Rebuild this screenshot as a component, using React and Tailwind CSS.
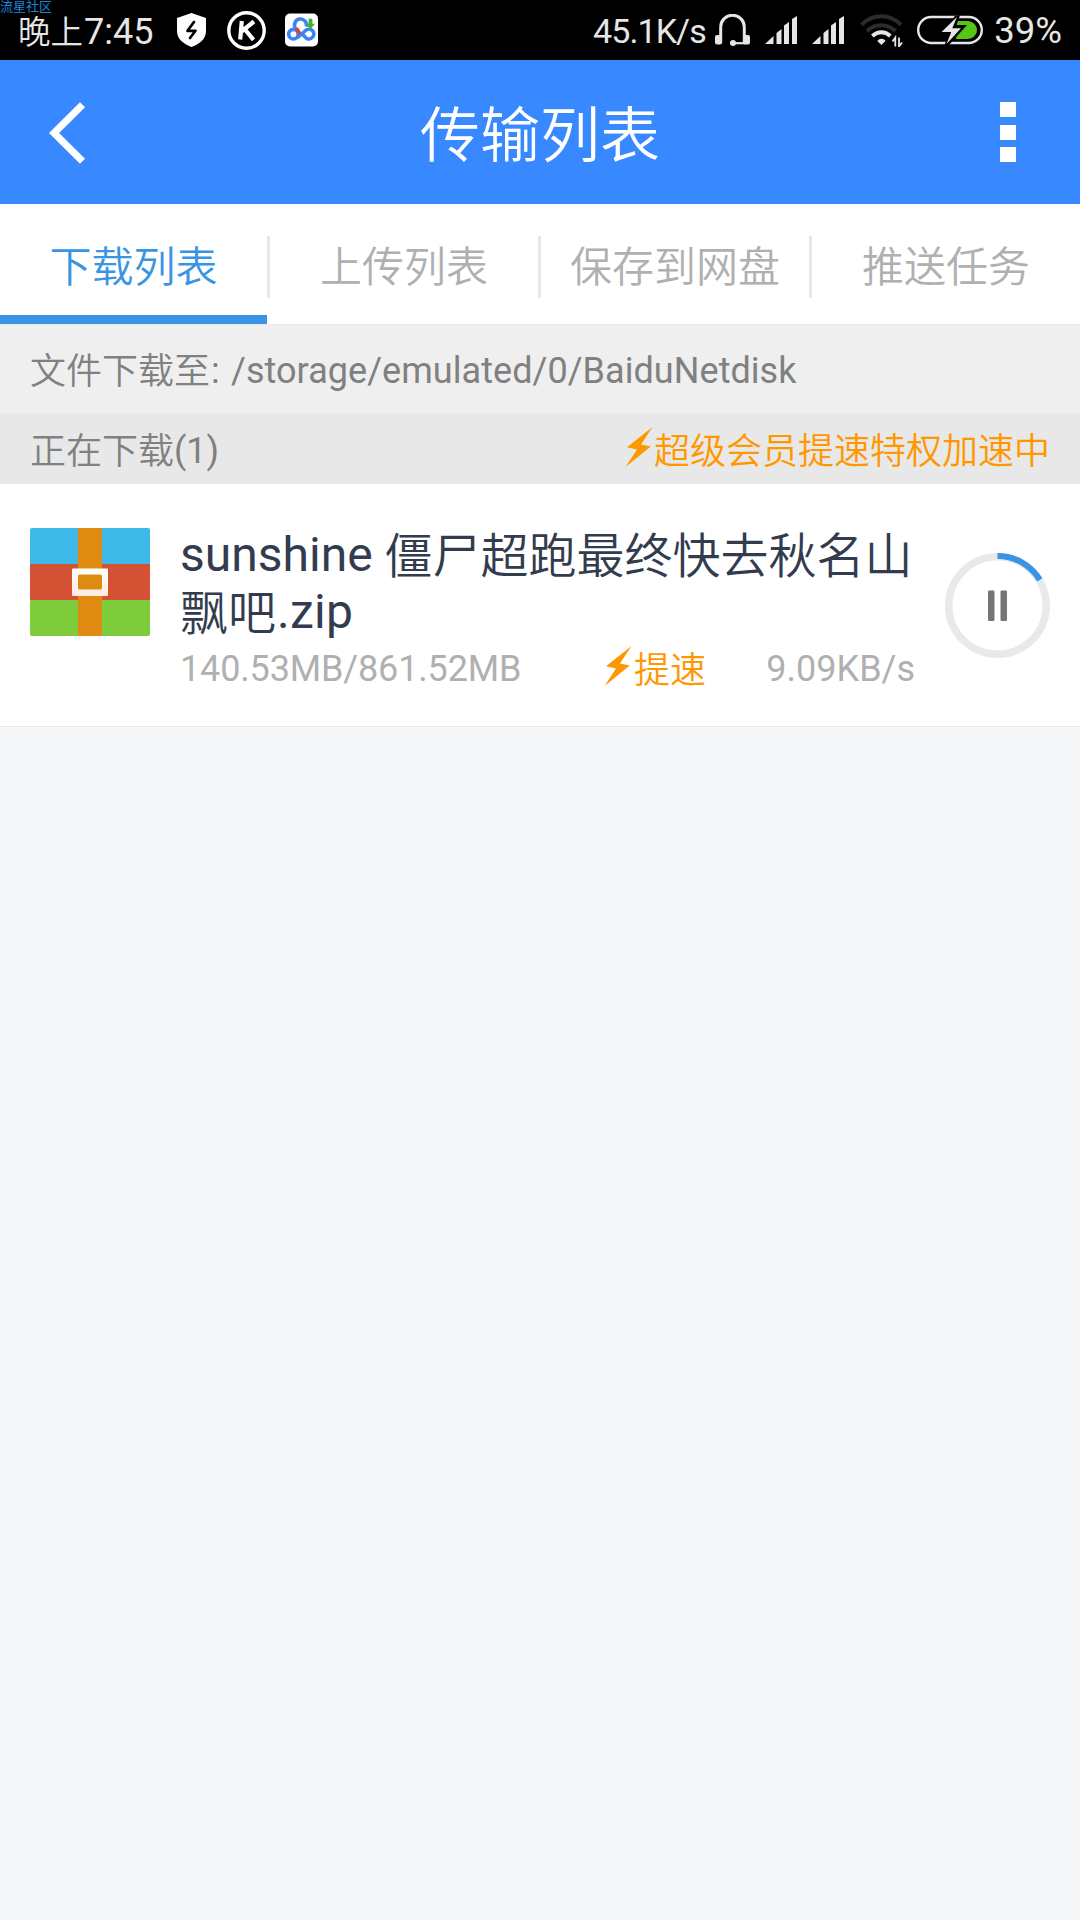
import React, { useState } from "react";

const TABS = ["下载列表", "上传列表", "保存到网盘", "推送任务"];

const TASK = {
  // file name, already broken into lines; latin and chinese runs use different weights
  name: [
    [
      { text: "sunshine", latin: true },
      { text: "僵尸超跑最终快去秋名山" },
    ],
    [{ text: "飘吧" }, { text: ".zip", latin: true }],
  ],
  size: "140.53MB/861.52MB",
  speed: "9.09KB/s",
  progress: 0.163,
};

function ShieldIcon() {
  return (
    <svg className="w-[29px] h-[34px]" viewBox="0 0 29 34" fill="none">
      <path d="M14.5 0 L29 5 V18 C29 26 23 30.500 14.500 34 C6 30.500 0 26 0 18 V5 Z" fill="#fff" />
      <path d="M17 9 L10.500 17.800 H18.500 L13 25" stroke="#000" strokeWidth="2.700" strokeLinecap="round" strokeLinejoin="round" />
    </svg>
  );
}

function KIcon() {
  return (
    <svg className="w-[39px] h-[39px]" viewBox="0 0 39 39" fill="none" stroke="#fff">
      <circle cx="19.500" cy="19.500" r="17.700" strokeWidth="3.400" />
      <path d="M14.800 10 L13.200 28.500 M27 10.500 L14.500 20.500 M18 18.500 L26.500 28.800" strokeWidth="4.200" />
    </svg>
  );
}

function NetdiskIcon() {
  return (
    <svg className="w-[33px] h-[34px]" viewBox="0 0 34 34" fill="none">
      <rect width="34" height="34" rx="5" fill="#fff" />
      <g stroke="#3b82f6" strokeWidth="3.700">
        <path d="M11 15.500 A6.200 6.200 0 1 1 22 13.500" />
        <circle cx="8.700" cy="21.300" r="4.900" />
        <path d="M12.500 25 L21 17.800 A5 5 0 1 1 21.500 25 L18.500 22" />
      </g>
      <path d="M11.800 15 L15.500 21" stroke="#e23c32" strokeWidth="3.600" />
      <path d="M24.300 5.500 H28.200 V10.500 H31 L26.200 16 L21.500 10.500 H24.300 Z" fill="#43b02a" />
    </svg>
  );
}

function HeadsetIcon() {
  return (
    <svg className="w-[35px] h-[32px]" viewBox="0 0 35 32" fill="none">
      <path d="M5.700 29 V13 A11.800 11.800 0 0 1 29.300 13 V29" stroke="#e6e6e6" strokeWidth="3" />
      <path d="M18 29.200 H30" stroke="#e6e6e6" strokeWidth="2.200" />
      <rect x="0" y="21" width="7" height="9.500" rx="2" fill="#e6e6e6" />
      <rect x="28" y="21" width="7" height="9.500" rx="2" fill="#e6e6e6" />
      <circle cx="18" cy="29" r="3" fill="#e6e6e6" />
    </svg>
  );
}

function SignalIcon() {
  return (
    <svg className="w-[32px] h-[28px]" viewBox="0 0 32 28" fill="#e6e6e6">
      <path d="M0 28 L8.500 20 V28 Z" />
      <path d="M11.500 17 L16.500 13 V28 H11.500 Z" />
      <path d="M19 9.500 L24 6 V28 H19 Z" />
      <path d="M27 3 L32 0 V28 H27 Z" />
    </svg>
  );
}

function WifiIcon() {
  return (
    <svg className="w-[43px] h-[33px]" viewBox="0 0 43 33" fill="none">
      <path d="M1.500 10.700 C13 -0.500 29.500 -0.500 41 10.700" stroke="#2b2b2b" strokeWidth="4" />
      <path d="M7 17 C15.500 9.300 26.500 9.300 35.500 17" stroke="#2b2b2b" strokeWidth="4" />
      <path d="M12.300 22 C18 17 25 17 30.300 22" stroke="#e6e6e6" strokeWidth="3.800" />
      <path d="M17.300 27 C19.500 24 23.500 24 25.500 27 L21.400 31 Z" fill="#e6e6e6" />
      <path d="M35.300 32.500 V23.500 L32.500 27.500 M39 23.500 V32.500 L42 28.500" stroke="#e6e6e6" strokeWidth="1.800" />
    </svg>
  );
}

function BatteryIcon() {
  return (
    <svg className="w-[66px] h-[30px]" viewBox="0 0 66 30" fill="none">
      <rect x="1.200" y="2" width="63.600" height="26" rx="13" stroke="#e6e6e6" strokeWidth="2.400" />
      <path d="M40 6 H51 A9 9 0 0 1 51 24 H39 Z" fill="#55c518" />
      <path d="M38.500 0.500 L20.500 19.500 H31.500 L27.500 30 L32 30 L50 10 H39.500 L43 0.500 Z" fill="#000" />
      <path d="M40 2 L24.500 17 H34.300 L29.500 29 L44 13.200 H35.300 Z" fill="#e6e6e6" />
    </svg>
  );
}

function StatusBar() {
  return (
    <div className="relative h-[60px] bg-black text-[#e6e6e6] flex items-center justify-between pl-[18px] pr-[18px]">
      <span className="absolute left-0 top-0 text-[13px] leading-[13px] text-[#1689dd]">流星社区</span>
      <div className="flex items-center">
        <div className="w-[159px] pt-1 text-[36px] leading-[56px] whitespace-nowrap">
          <span className="text-[32.500px] font-[350]">晚上</span>
          <span className="pl-[1px]">7:45</span>
        </div>
        <ShieldIcon />
        <div className="w-[21px]" />
        <KIcon />
        <div className="w-[19px]" />
        <NetdiskIcon />
      </div>
      <div className="flex items-center">
        <span className="w-[122px] pt-[2px] text-[34px] leading-[56px] tracking-[-0.9px]">45.1K/s</span>
        <HeadsetIcon />
        <div className="w-[15px]" />
        <SignalIcon />
        <div className="w-[15px]" />
        <SignalIcon />
        <div className="w-[16px]" />
        <WifiIcon />
        <div className="w-[14px]" />
        <BatteryIcon />
        <span className="w-[79px] pt-[2px] text-right text-[36.500px] leading-[56px]">39%</span>
      </div>
    </div>
  );
}

function Header() {
  return (
    <header className="h-[144px] bg-[#3888ff] text-white flex items-center justify-between pl-[49px] pr-[64px]">
      <button className="w-[80px] pt-[1px]">
        <svg className="w-[38px] h-[62px]" viewBox="0 0 38 62" fill="none">
          <path d="M33.500 2.800 L5 31 L33.500 59.200" stroke="#fff" strokeWidth="7.200" />
        </svg>
      </button>
      <h1 className="pt-[10px] pl-[15px] text-[60px] leading-[72px] font-[350]">传输列表</h1>
      <button className="w-[80px] flex flex-col items-end gap-[7.500px]">
        <span className="w-[16px] h-[15px] bg-white" />
        <span className="w-[16px] h-[15px] bg-white" />
        <span className="w-[16px] h-[15px] bg-white" />
      </button>
    </header>
  );
}

function Tabs() {
  const [active, setActive] = useState(0);
  return (
    <nav className="h-[120px] bg-white grid grid-cols-[267px_3px_268px_3px_268px_3px_268px]">
      {TABS.map((label, i) => (
        <React.Fragment key={label}>
          {i > 0 && <div className="h-[62px] mt-8 bg-[#e8e8e8]" />}
          <button
            onClick={() => setActive(i)}
            className={`h-full pt-[17px] border-b-[9px] text-[42px] leading-[94px] font-[350] ${
              active === i
                ? "text-[#3994e4] border-[#3994e4]"
                : "text-[#b0b0b0] border-transparent"
            }`}
          >
            {label}
          </button>
        </React.Fragment>
      ))}
    </nav>
  );
}

function Bolt() {
  return (
    <svg className="w-[28px] h-[40px]" viewBox="0 0 28 40" fill="#ff9800">
      <path d="M27.500 0 L2 20.300 L12 22.500 L0.500 40 L25.800 19.600 L16 17.400 Z" />
    </svg>
  );
}

function ZipIcon() {
  return (
    <svg className="w-[120px] h-[108px]" viewBox="0 0 120 108">
      <defs>
        <clipPath id="zip">
          <rect width="120" height="108" rx="2" />
        </clipPath>
        <linearGradient id="buckle" x1="0" y1="0" x2="0" y2="1">
          <stop offset="0" stopColor="#fff" />
          <stop offset="1" stopColor="#fcecdf" />
        </linearGradient>
      </defs>
      <g clipPath="url(#zip)">
        <rect width="120" height="36" fill="#3fb9e8" />
        <rect y="36" width="120" height="36" fill="#d45133" />
        <rect y="72" width="120" height="36" fill="#7ecb3c" />
        <rect x="48" width="24" height="108" fill="#df8b12" />
        <rect x="42" y="40.500" width="36" height="27.500" rx="1" fill="url(#buckle)" />
        <rect x="48" y="46.500" width="24" height="15" rx="1.500" fill="#df8b12" />
      </g>
    </svg>
  );
}

function PauseButton({ progress }) {
  const r = 48.75;
  const len = 2 * Math.PI * r;
  return (
    <button className="w-[105px] h-[105px]">
      <svg viewBox="0 0 105 105" fill="none">
        <circle cx="52.500" cy="52.500" r={r} stroke="#e9e9e9" strokeWidth="7.500" />
        <circle
          cx="52.500"
          cy="52.500"
          r="49.500"
          stroke="#3994e4"
          strokeWidth="6"
          strokeDasharray={`${progress * len * 1.015} ${len * 2}`}
          transform="rotate(-90 52.5 52.5)"
        />
        <rect x="43" y="37.500" width="6.500" height="30.500" rx="1.200" fill="#757575" />
        <rect x="55.500" y="37.500" width="6.500" height="30.500" rx="1.200" fill="#757575" />
      </svg>
    </button>
  );
}

function TaskItem({ task }) {
  return (
    <div className="h-[243px] bg-white border-b border-[#e9e9e9] flex px-[30px] pt-[42px]">
      <div className="pt-[2px]">
        <ZipIcon />
      </div>
      <div className="w-[735px] ml-[30px]">
        <div className="text-[48px] leading-[57px] text-[#323c4e]">
          {task.name.map((line, i) => (
            <div key={i} className="flex gap-[1px] h-[57px] whitespace-nowrap">
              {line.map((run) => (
                <span
                  key={run.text}
                  className={
                    run.latin
                      ? "font-normal not-first:tracking-[0.3px]"
                      : "font-[350] pt-[2px] not-first:ml-[11px]"
                  }
                >
                  {run.text}
                </span>
              ))}
            </div>
          ))}
        </div>
        <div className="flex items-center text-[36px] leading-[58px] text-[#b0b0b0]">
          <span className="w-[424px] tracking-[-0.15px]">{task.size}</span>
          <div className="flex items-center text-[#ff9800] font-[350]">
            <div className="w-[30px] pb-[7px]">
              <Bolt />
            </div>
            <span className="pt-[2px] -mb-[2px]">提速</span>
          </div>
          <span className="ml-auto">{task.speed}</span>
        </div>
      </div>
      <div className="ml-[30px] pt-[27px]">
        <PauseButton progress={task.progress} />
      </div>
    </div>
  );
}

export default function App() {
  return (
    <div
      lang="zh-CN"
      className="w-[1080px] h-[1920px] overflow-hidden bg-[#f5f6f8] font-['Roboto','Noto_Sans_CJK_SC',sans-serif]"
    >
      <StatusBar />
      <Header />
      <Tabs />
      <div className="h-[90px] pt-[3px] px-[30px] bg-[#efefef] border-t border-[#e9e9e9] flex items-center text-[36px] text-[#808080]">
        <span className="pt-[2px] font-[350]">文件下载至</span>
        <span className="w-[21px] pl-[1px]">:</span>
        <span className="tracking-[0.050px]">/storage/emulated/0/BaiduNetdisk</span>
      </div>
      <div className="h-[70px] pt-[3px] px-[30px] bg-[#e8e8e8] flex items-center justify-between text-[36px] leading-[60px] text-[#808080]">
        <div className="flex">
          <span className="pt-[2px] font-[350]">正在下载</span>
          <span className="pt-[1px]">(1)</span>
        </div>
        <div className="flex items-center text-[#ff9800] font-[350]">
          <div className="w-[29px] pb-[7px]">
            <Bolt />
          </div>
          <span className="pt-[2px]">超级会员提速特权加速中</span>
        </div>
      </div>
      <TaskItem task={TASK} />
    </div>
  );
}
